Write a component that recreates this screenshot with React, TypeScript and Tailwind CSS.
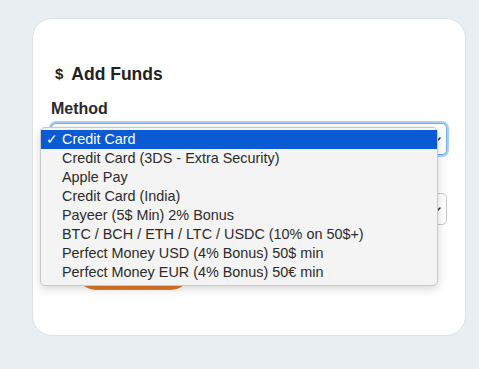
import React from 'react';

const methods = [
  'Credit Card',
  'Credit Card (3DS - Extra Security)',
  'Apple Pay',
  'Credit Card (India)',
  'Payeer (5$ Min) 2% Bonus',
  'BTC / BCH / ETH / LTC / USDC (10% on 50$+)',
  'Perfect Money USD (4% Bonus) 50$ min',
  'Perfect Money EUR (4% Bonus) 50€ min',
];

const Chevron = () => (
  <svg width="10" height="10" viewBox="0 0 10 10" className="text-[#333]">
    <path d="M2 4 L5 7 L8 4" fill="none" stroke="currentColor" strokeWidth="1.6" strokeLinecap="round" strokeLinejoin="round" />
  </svg>
);

export default function App() {
  return (
    <div className="w-[479px] h-[369px] bg-[#e9eef2] overflow-hidden pt-[18px] pl-[32px] font-['Liberation_Sans',Arial,sans-serif]">
      <div className="relative w-[434px] h-[318px] bg-white rounded-[20px] border border-[#dde2e6] px-[18px] pt-[44px]">
        {/* Title */}
        <div className="flex items-center h-[22px] gap-[8px] pl-[4px] text-[#222]">
          <span className="text-[15px] font-semibold">$</span>
          <span className="text-[17.5px] font-semibold">Add Funds</span>
        </div>

        {/* Method */}
        <div className="mt-[15px] text-[16px] leading-[18px] font-bold text-[#2a2a2a]">Method</div>
        <div className="relative mt-[5px]">
          <div className="h-[32px] w-[396px] rounded-[5px] border border-[#6db0ec] ring-2 ring-[#a9d1f5] bg-white flex items-center justify-end pr-[4px]">
            <Chevron />
          </div>

          {/* Open menu */}
          <div className="absolute z-10 left-[-11px] top-[4px] w-[398px] h-[159px] bg-[#f4f4f4] border border-[#c9c9c9] rounded-[5px] shadow-[0_3px_10px_rgba(0,0,0,0.16)] py-[2px] text-[14.4px] text-[#2b2b2b]">
            {methods.map((m, i) => (
              <div
                key={m}
                className={
                  i === 0
                    ? 'h-[19px] flex items-center bg-[#0a5bd3] text-white'
                    : 'h-[19px] flex items-center'
                }
              >
                <span className="w-[21px] pl-[5px] text-[14px]">{i === 0 ? '✓' : ''}</span>
                <span>{m}</span>
              </div>
            ))}
          </div>
        </div>

        {/* Amount (label hidden under the open menu) */}
        <div className="mt-[10px] h-[18px]" />
        <div className="mt-[10px] h-[32px] w-[396px] rounded-[5px] border border-[#c8c8c8] bg-white flex items-center justify-end pr-[4px]">
          <Chevron />
        </div>

        {/* Button (mostly hidden under the open menu) */}
        <div className="mt-[27px] ml-[26px] w-[113px] h-[38px] rounded-full bg-[#e27a2b]" />
      </div>
    </div>
  );
}
